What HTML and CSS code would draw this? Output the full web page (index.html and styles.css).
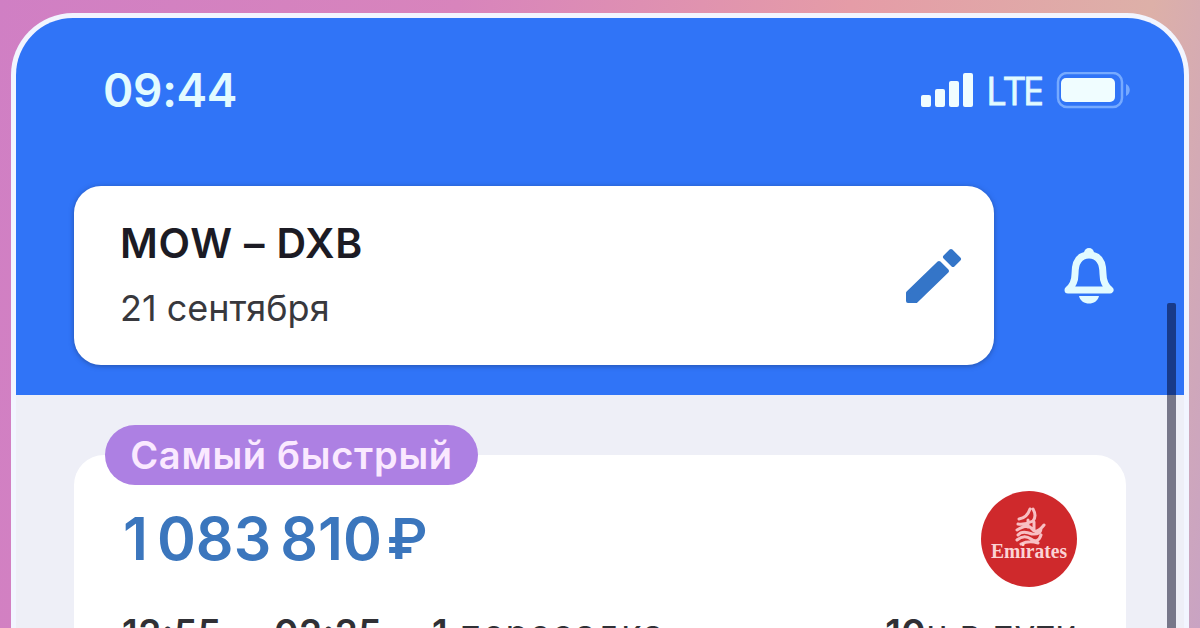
FILE: index.html
```html
<!DOCTYPE html>
<html lang="ru">
<head>
    <meta charset="UTF-8">
    <meta name="viewport" content="width=device-width, initial-scale=1.0">
    <title>MOW – DXB</title>
    <link rel="stylesheet" href="styles.css">
</head>
<body>
    <div class="phone">
        <header class="header">
            <div class="status-bar">
                <span class="time">09:44</span>
                <div class="status-icons">
                    <svg class="signal" width="52" height="36" viewBox="0 0 52 36">
                        <rect x="0" y="22" width="10" height="12" rx="2"/>
                        <rect x="14" y="16" width="10" height="18" rx="2"/>
                        <rect x="28" y="8" width="10" height="26" rx="2"/>
                        <rect x="42" y="0" width="10" height="34" rx="2"/>
                    </svg>
                    <span class="network">LTE</span>
                    <svg class="battery" width="76" height="38" viewBox="0 0 76 38">
                        <rect class="battery-case" x="2" y="1" width="64" height="34" rx="9"/>
                        <rect class="battery-level" x="5" y="6" width="54" height="24" rx="5"/>
                        <path class="battery-tip" d="M70 12c5 2 5 10 0 12z"/>
                    </svg>
                </div>
            </div>
            <div class="search-row">
                <div class="search-card">
                    <div class="search-info">
                        <div class="route">MOW – DXB</div>
                        <div class="date">21 сентября</div>
                    </div>
                    <svg class="pencil" width="58" height="58" viewBox="0 0 58 58">
                        <path d="M3 46L34 16L42 24L11 54H3Z"/>
                        <path d="M40 10L46 4L54 12L48 18Z"/>
                    </svg>
                </div>
                <svg class="bell" width="52" height="58" viewBox="0 0 52 58">
                    <path class="bell-body" d="M5 43Q12 37 12 27C12 15 16 8 26 8S40 15 40 27Q40 37 47 43Z"/>
                    <circle cx="26" cy="6" r="5"/>
                    <path d="M16 49H36C34 59 18 59 16 49Z"/>
                </svg>
            </div>
        </header>
        <main class="results">
            <article class="ticket">
                <span class="badge">Самый быстрый</span>
                <div class="ticket-top">
                    <div class="price"><span>1</span><span>083</span><span>810</span><span class="currency">₽</span></div>
                    <svg class="airline" width="98" height="98" viewBox="0 0 98 98">
                        <circle cx="49" cy="48" r="48"/>
                        <path d="M39 28Q47 27 50 18M53 18Q57 25 53 30Q45 34 38 33M37 39Q48 32 52 38T64 34M61 37Q61 44 52 43Q42 39 38 44M37 49Q44 43 51 48T61 44M41 53Q49 49 58 52M48 29V36M54 31V39"/>
                        <text x="49" y="67" textLength="76" lengthAdjust="spacingAndGlyphs">Emirates</text>
                    </svg>
                </div>
                <div class="flight">
                    <span class="depart">12:55</span>
                    <span class="arrive">02:25</span>
                    <span class="stops"><b>1</b> пересадка</span>
                    <span class="duration"><b>10</b>ч в пути</span>
                </div>
            </article>
        </main>
        <div class="scrollbar"></div>
    </div>
</body>
</html>
```

FILE: styles.css
```css
* {
    box-sizing: border-box;
}
body {
    margin: 0;
    height: 628px;
    padding: 13px 11px 0;
    overflow: hidden;
    font-family: Inter, "Liberation Sans", sans-serif;
    background: linear-gradient(100deg, #d07fc4 0%, #d884bc 35%, #e59ca7 65%, #ddb0a8 88%, #c9a3c3 100%);
}
.phone {
    position: relative;
    height: 615px;
    border: 5px solid #f2f5ff;
    border-bottom: none;
    border-radius: 62px 62px 0 0;
    background-color: #eeeff7;
    overflow: hidden;
}
.header {
    height: 377px;
    background-color: #3074f7;
}
.status-bar {
    display: flex;
    justify-content: space-between;
    align-items: center;
    height: 146px;
    padding: 0 52px 0 87px;
}
.time {
    margin-top: -2px;
    font-size: 46px;
    font-weight: 600;
    letter-spacing: -0.3px;
    color: #e2fbff;
}
.status-icons {
    display: flex;
    align-items: center;
    fill: #f0fdff;
}
.network {
    margin: -3px 14px 0 13px;
    font-family: "Open Sans", sans-serif;
    font-size: 38px;
    font-weight: 500;
    letter-spacing: -2px;
    line-height: 44px;
    color: #e2fbff;
    -webkit-text-stroke: 0.8px #e2fbff;
}
.battery-case {
    fill: none;
    stroke: #76aaff;
    stroke-width: 2.5;
}
.battery-tip {
    fill: #76aaff;
}
.search-row {
    display: flex;
    align-items: center;
    margin-top: 22px;
    padding-left: 58px;
}
.search-card {
    display: flex;
    align-items: center;
    justify-content: space-between;
    width: 920px;
    height: 179px;
    padding: 0 31px 0 46px;
    border-radius: 27px;
    background-color: #fff;
    box-shadow: 0 1px 5px rgba(30, 65, 130, 0.65);
}
.search-info {
    padding-bottom: 3px;
}
.route {
    font-size: 41px;
    font-weight: 600;
    letter-spacing: 0.8px;
    line-height: 50px;
    color: #1c1b24;
}
.date {
    margin-top: 18px;
    font-size: 36px;
    line-height: 44px;
    color: #38383d;
}
.pencil {
    fill: #3475c8;
    stroke: #3475c8;
    stroke-width: 4;
    stroke-linejoin: round;
}
.bell {
    margin-left: 69px;
    fill: #e2fbff;
}
.bell-body {
    fill: none;
    stroke: #e2fbff;
    stroke-width: 7;
    stroke-linejoin: round;
}
.results {
    padding: 60px 58px 0;
}
.ticket {
    position: relative;
    height: 173px;
    padding: 36px 48px 0;
    border-radius: 30px 30px 0 0;
    background-color: #fff;
}
.badge {
    position: absolute;
    top: -30px;
    left: 31px;
    width: 373px;
    height: 60px;
    border-radius: 30px;
    background-color: #ad80e3;
    color: #fae9ff;
    font-size: 38px;
    font-weight: 600;
    letter-spacing: 0.7px;
    line-height: 61px;
    text-align: center;
}
.ticket-top {
    display: flex;
    justify-content: space-between;
    height: 98px;
}
.price {
    display: flex;
    gap: 9px;
    padding-left: 1px;
    font-size: 59px;
    font-weight: 600;
    line-height: 96px;
    color: #3b76bd;
}
.currency {
    margin-left: -4px;
    font-size: 56px;
}
.airline {
    fill: #cf292c;
}
.airline path {
    fill: none;
    stroke: #f8bfc3;
    stroke-width: 3;
    stroke-linecap: round;
}
.airline text {
    fill: #fbd3d4;
    font-family: "Liberation Serif", serif;
    font-size: 20px;
    font-weight: 700;
    text-anchor: middle;
}
.flight {
    display: flex;
    margin-top: 22px;
    font-size: 37px;
    line-height: 44px;
    color: #303035;
    white-space: nowrap;
}
.flight b,
.depart,
.arrive {
    font-weight: 600;
    letter-spacing: 0.5px;
}
.depart {
    width: 152px;
}
.arrive {
    width: 158px;
}
.stops {
    letter-spacing: 1.2px;
}
.duration {
    margin-left: auto;
    letter-spacing: 0.8px;
}
.scrollbar {
    position: absolute;
    top: 285px;
    right: 8px;
    bottom: 0;
    width: 9px;
    border-radius: 2px 2px 0 0;
    background-color: rgba(0, 0, 30, 0.5);
}
```
